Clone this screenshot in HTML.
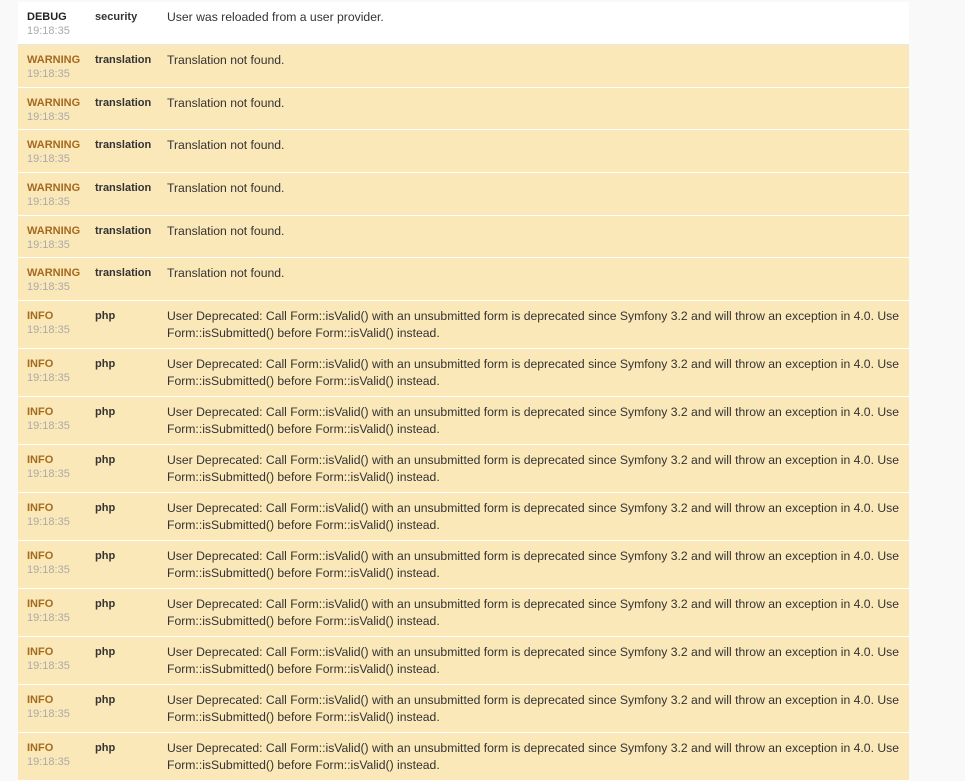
<!DOCTYPE html>
<html><head><style>
body{margin:0;background:#f9f9f9;font-family:"Liberation Sans",Arial,sans-serif;width:965px;height:750px;overflow:hidden;position:relative}
.t{position:absolute;left:18px;top:2px;width:891px}
.r{box-sizing:border-box;border-bottom:1px solid #fff;position:relative;background:#fbe8b8}
.r.d{background:#fff;border-bottom:1px solid #e6e6e6;height:43px}
.r.w{height:42.7px}
.r.i{height:48px}
.l{position:absolute;left:9px;top:8px;font-size:11px;font-weight:bold;color:#a46a1f;line-height:14px}
.d .l{color:#222}
.tm{display:block;font-weight:normal;color:#aaa;font-size:11px}
.c{position:absolute;left:77px;top:8px;font-size:11px;font-weight:bold;color:#333;line-height:14px}
.m{position:absolute;left:149px;right:6px;top:7px;font-size:12.2px;color:#333;line-height:17px}
</style></head><body>
<div class="t">
<div class="r d"><div class="l">DEBUG<span class="tm">19:18:35</span></div><div class="c">security</div><div class="m">User was reloaded from a user provider.</div></div>
<div class="r w"><div class="l">WARNING<span class="tm">19:18:35</span></div><div class="c">translation</div><div class="m">Translation not found.</div></div>
<div class="r w"><div class="l">WARNING<span class="tm">19:18:35</span></div><div class="c">translation</div><div class="m">Translation not found.</div></div>
<div class="r w"><div class="l">WARNING<span class="tm">19:18:35</span></div><div class="c">translation</div><div class="m">Translation not found.</div></div>
<div class="r w"><div class="l">WARNING<span class="tm">19:18:35</span></div><div class="c">translation</div><div class="m">Translation not found.</div></div>
<div class="r w"><div class="l">WARNING<span class="tm">19:18:35</span></div><div class="c">translation</div><div class="m">Translation not found.</div></div>
<div class="r w"><div class="l">WARNING<span class="tm">19:18:35</span></div><div class="c">translation</div><div class="m">Translation not found.</div></div>
<div class="r i"><div class="l">INFO<span class="tm">19:18:35</span></div><div class="c">php</div><div class="m">User Deprecated: Call Form::isValid() with an unsubmitted form is deprecated since Symfony 3.2 and will throw an exception in 4.0. Use Form::isSubmitted() before Form::isValid() instead.</div></div>
<div class="r i"><div class="l">INFO<span class="tm">19:18:35</span></div><div class="c">php</div><div class="m">User Deprecated: Call Form::isValid() with an unsubmitted form is deprecated since Symfony 3.2 and will throw an exception in 4.0. Use Form::isSubmitted() before Form::isValid() instead.</div></div>
<div class="r i"><div class="l">INFO<span class="tm">19:18:35</span></div><div class="c">php</div><div class="m">User Deprecated: Call Form::isValid() with an unsubmitted form is deprecated since Symfony 3.2 and will throw an exception in 4.0. Use Form::isSubmitted() before Form::isValid() instead.</div></div>
<div class="r i"><div class="l">INFO<span class="tm">19:18:35</span></div><div class="c">php</div><div class="m">User Deprecated: Call Form::isValid() with an unsubmitted form is deprecated since Symfony 3.2 and will throw an exception in 4.0. Use Form::isSubmitted() before Form::isValid() instead.</div></div>
<div class="r i"><div class="l">INFO<span class="tm">19:18:35</span></div><div class="c">php</div><div class="m">User Deprecated: Call Form::isValid() with an unsubmitted form is deprecated since Symfony 3.2 and will throw an exception in 4.0. Use Form::isSubmitted() before Form::isValid() instead.</div></div>
<div class="r i"><div class="l">INFO<span class="tm">19:18:35</span></div><div class="c">php</div><div class="m">User Deprecated: Call Form::isValid() with an unsubmitted form is deprecated since Symfony 3.2 and will throw an exception in 4.0. Use Form::isSubmitted() before Form::isValid() instead.</div></div>
<div class="r i"><div class="l">INFO<span class="tm">19:18:35</span></div><div class="c">php</div><div class="m">User Deprecated: Call Form::isValid() with an unsubmitted form is deprecated since Symfony 3.2 and will throw an exception in 4.0. Use Form::isSubmitted() before Form::isValid() instead.</div></div>
<div class="r i"><div class="l">INFO<span class="tm">19:18:35</span></div><div class="c">php</div><div class="m">User Deprecated: Call Form::isValid() with an unsubmitted form is deprecated since Symfony 3.2 and will throw an exception in 4.0. Use Form::isSubmitted() before Form::isValid() instead.</div></div>
<div class="r i"><div class="l">INFO<span class="tm">19:18:35</span></div><div class="c">php</div><div class="m">User Deprecated: Call Form::isValid() with an unsubmitted form is deprecated since Symfony 3.2 and will throw an exception in 4.0. Use Form::isSubmitted() before Form::isValid() instead.</div></div>
<div class="r i"><div class="l">INFO<span class="tm">19:18:35</span></div><div class="c">php</div><div class="m">User Deprecated: Call Form::isValid() with an unsubmitted form is deprecated since Symfony 3.2 and will throw an exception in 4.0. Use Form::isSubmitted() before Form::isValid() instead.</div></div>
</div>
</body></html>
